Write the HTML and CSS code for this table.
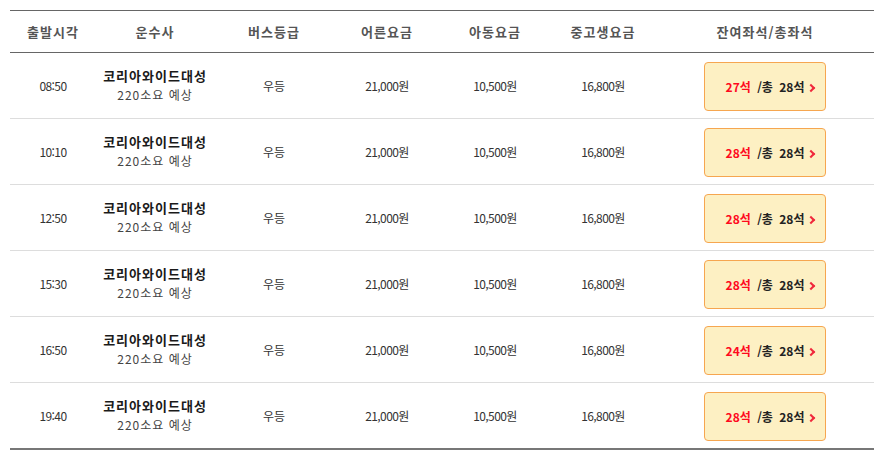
FILE: index.html
```html
<!DOCTYPE html>
<html lang="ko">
<head>
    <meta charset="UTF-8">
    <title>배차 조회</title>
    <link rel="stylesheet" href="styles.css">
</head>
<body>
    <table class="schedule">
        <colgroup>
            <col class="c-time">
            <col class="c-corp">
            <col class="c-grade">
            <col class="c-fare">
            <col class="c-fare2">
            <col class="c-fare3">
            <col class="c-seat">
        </colgroup>
        <thead>
            <tr>
                <th>출발시각</th>
                <th>운수사</th>
                <th>버스등급</th>
                <th>어른요금</th>
                <th>아동요금</th>
                <th>중고생요금</th>
                <th>잔여좌석/총좌석</th>
            </tr>
        </thead>
        <tbody>
            <tr>
                <td class="num">08:50</td>
                <td><strong class="corp">코리아와이드대성</strong><span class="dur">220소요 예상</span></td>
                <td>우등</td>
                <td class="num">21,000원</td>
                <td class="num">10,500원</td>
                <td class="num">16,800원</td>
                <td><button class="seat"><em>27석</em> /총 28석<i class="arrow"></i></button></td>
            </tr>
            <tr>
                <td class="num">10:10</td>
                <td><strong class="corp">코리아와이드대성</strong><span class="dur">220소요 예상</span></td>
                <td>우등</td>
                <td class="num">21,000원</td>
                <td class="num">10,500원</td>
                <td class="num">16,800원</td>
                <td><button class="seat"><em>28석</em> /총 28석<i class="arrow"></i></button></td>
            </tr>
            <tr>
                <td class="num">12:50</td>
                <td><strong class="corp">코리아와이드대성</strong><span class="dur">220소요 예상</span></td>
                <td>우등</td>
                <td class="num">21,000원</td>
                <td class="num">10,500원</td>
                <td class="num">16,800원</td>
                <td><button class="seat"><em>28석</em> /총 28석<i class="arrow"></i></button></td>
            </tr>
            <tr>
                <td class="num">15:30</td>
                <td><strong class="corp">코리아와이드대성</strong><span class="dur">220소요 예상</span></td>
                <td>우등</td>
                <td class="num">21,000원</td>
                <td class="num">10,500원</td>
                <td class="num">16,800원</td>
                <td><button class="seat"><em>28석</em> /총 28석<i class="arrow"></i></button></td>
            </tr>
            <tr>
                <td class="num">16:50</td>
                <td><strong class="corp">코리아와이드대성</strong><span class="dur">220소요 예상</span></td>
                <td>우등</td>
                <td class="num">21,000원</td>
                <td class="num">10,500원</td>
                <td class="num">16,800원</td>
                <td><button class="seat"><em>24석</em> /총 28석<i class="arrow"></i></button></td>
            </tr>
            <tr>
                <td class="num">19:40</td>
                <td><strong class="corp">코리아와이드대성</strong><span class="dur">220소요 예상</span></td>
                <td>우등</td>
                <td class="num">21,000원</td>
                <td class="num">10,500원</td>
                <td class="num">16,800원</td>
                <td><button class="seat"><em>28석</em> /총 28석<i class="arrow"></i></button></td>
            </tr>
        </tbody>
    </table>
</body>
</html>
```

FILE: styles.css
```css
body {
    margin: 10px 6px 0 10px;
    background: #fff;
    font-family: "Noto Sans CJK KR", "Noto Sans", sans-serif;
    color: #333;
}
.schedule {
    width: 864px;
    border-collapse: collapse;
    table-layout: fixed;
    border-top: 1px solid #666;
    border-bottom: 2px solid #777;
}
.c-time { width: 86px; }
.c-corp { width: 118px; }
.c-grade { width: 120px; }
.c-fare { width: 106px; }
.c-fare2 { width: 110px; }
.c-fare3 { width: 106px; }
.c-seat { width: 218px; }

th {
    height: 41px;
    padding: 0;
    font-size: 13px;
    font-weight: bold;
    color: #555;
    letter-spacing: 1px;
    border-bottom: 1px solid #666;
}
td {
    height: 65px;
    padding: 0;
    text-align: center;
    font-size: 12px;
    color: #333;
    border-bottom: 1px solid #ddd;
}
tbody tr:last-child td {
    border-bottom: none;
}
td.num {
    letter-spacing: -0.6px;
}
.corp {
    display: block;
    font-size: 13px;
    color: #1a1a1a;
    letter-spacing: 1px;
    line-height: 18px;
}
.dur {
    display: block;
    font-size: 12px;
    color: #444;
    letter-spacing: 1px;
    line-height: 20px;
}
.seat {
    display: block;
    width: 122px;
    height: 49px;
    margin: 1px 0 0 48px;
    padding: 0 0 0 10px;
    background: #fdf0c3;
    border: 1px solid #f6a650;
    border-radius: 4px;
    font-family: inherit;
    font-size: 12px;
    font-weight: bold;
    color: #222;
    word-spacing: 3px;
    cursor: pointer;
}
.seat em {
    font-style: normal;
    color: #ff0a1e;
}
.arrow {
    display: inline-block;
    width: 4px;
    height: 4px;
    margin-left: 4px;
    border-top: 2px solid #f0283c;
    border-right: 2px solid #f0283c;
    transform: rotate(45deg);
    vertical-align: 1px;
}
```
